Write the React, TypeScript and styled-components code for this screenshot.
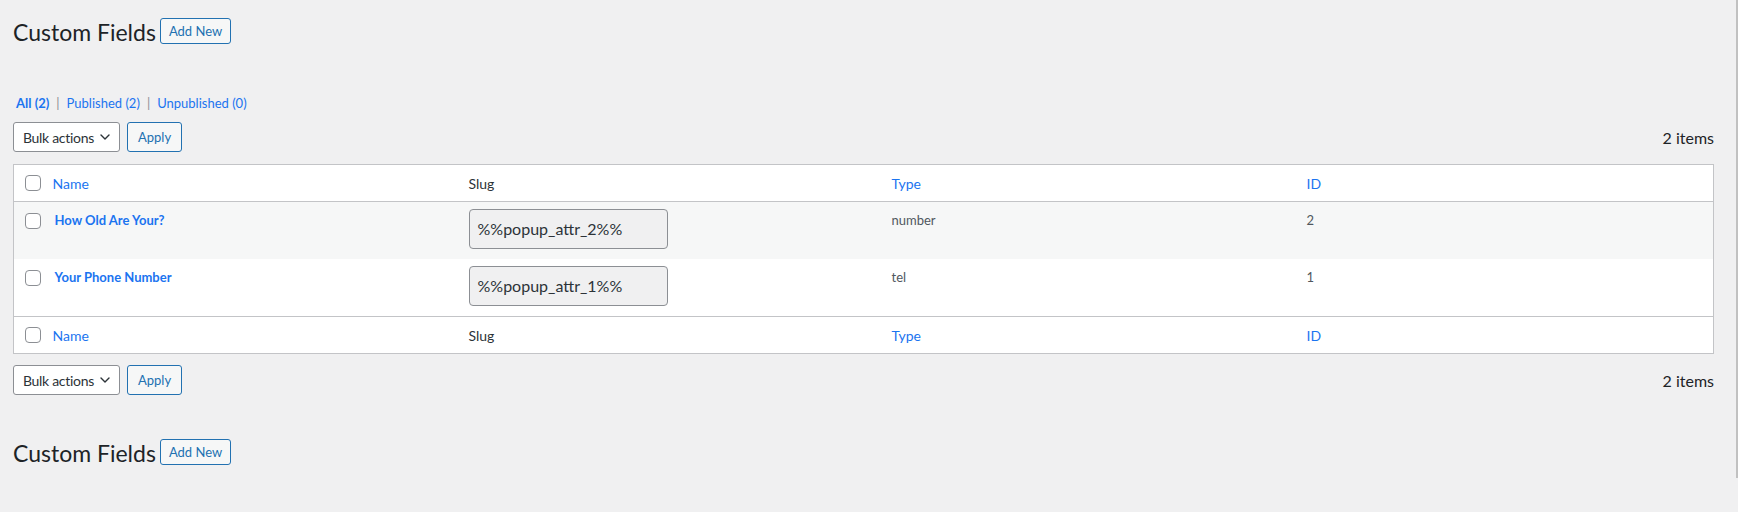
import React from "react";
import styled, { createGlobalStyle } from "styled-components";

const GlobalStyle = createGlobalStyle`
  html, body { margin: 0; padding: 0; background: #f0f0f1; }
  body {
    font-family: Lato, "Segoe UI", "Liberation Sans", sans-serif;
    color: #3c434a;
    font-size: 13px;
  }
  * { box-sizing: border-box; }
`;

const LINK = "#1b74f0";

const Page = styled.div`
  display: flex;
  align-items: flex-start;
  width: 1738px;
  min-height: 512px;
`;

const Main = styled.main`
  flex: 1;
  min-width: 0;
  padding: 0 22px 0 13px;
`;

const ScrollEdge = styled.div`
  flex-shrink: 0;
  width: 2px;
  height: 478px;
  background: #c1c1c1;
`;

const TitleRow = styled.div<{ $gap?: number }>`
  display: flex;
  align-items: flex-start;
  gap: 4px;
  padding-top: 16px;
  margin-top: ${(p) => p.$gap ?? 0}px;
`;

const Title = styled.h1`
  margin: 0;
  font-size: 23px;
  font-weight: 400;
  line-height: 32px;
  color: #1d2327;
`;

const OutlineButton = styled.button<{ $h: number; $pad: number }>`
  display: inline-flex;
  align-items: center;
  justify-content: center;
  height: ${(p) => p.$h}px;
  padding: 0 ${(p) => p.$pad}px;
  margin-top: ${(p) => (p.$h === 26 ? 2 : 0)}px;
  border: 1px solid #2271b1;
  border-radius: 3px;
  background: #f6f7f7;
  color: #2271b1;
  font-family: inherit;
  font-size: 13px;
  font-weight: 400;
  cursor: pointer;
`;

const Filters = styled.ul`
  display: flex;
  align-items: center;
  margin: 45px 0 0;
  padding: 0 0 0 3px;
  list-style: none;
  font-size: 13px;
  line-height: 20px;
`;

const FilterLink = styled.a<{ $current?: boolean }>`
  color: ${LINK};
  font-weight: ${(p) => (p.$current ? 700 : 400)};
  text-decoration: none;
`;

const Sep = styled.span`
  color: #8c8f94;
  margin: 0 7px;
`;

const TableNav = styled.div<{ $top?: boolean }>`
  display: flex;
  align-items: center;
  gap: 7px;
  height: 30px;
  margin: ${(p) => (p.$top ? "9px 0 12px" : "11px 0 0")};
`;

const Select = styled.div`
  display: flex;
  align-items: center;
  justify-content: space-between;
  width: 107px;
  height: 30px;
  padding: 0 9px 0 9px;
  border: 1px solid #8c8f94;
  border-radius: 3px;
  background: #fff;
  color: #2c3338;
  font-size: 14px;
  letter-spacing: -0.3px;
`;

const Count = styled.span`
  margin-left: auto;
  font-size: 16px;
  color: #1d2327;
`;

const Table = styled.table`
  width: 100%;
  table-layout: fixed;
  border-collapse: collapse;
  border: 1px solid #c3c4c7;
  background: #fff;
`;

const HeadRow = styled.tr<{ $foot?: boolean }>`
  ${(p) =>
    p.$foot ? "border-top: 1px solid #c3c4c7;" : "border-bottom: 1px solid #c3c4c7;"}
`;

const Th = styled.th<{ $check?: boolean }>`
  height: 37px;
  padding: ${(p) => (p.$check ? "0 0 0 11px" : "0 10px")};
  text-align: left;
  font-size: 14px;
  font-weight: 400;
  line-height: 21px;
  color: #2c3338;
  vertical-align: middle;
`;

const SortLink = styled.a`
  color: ${LINK};
  text-decoration: none;
`;

const BodyRow = styled.tr<{ $alt?: boolean }>`
  background: ${(p) => (p.$alt ? "#f6f7f7" : "#fff")};
`;

const Td = styled.td<{ $check?: boolean }>`
  padding: ${(p) => (p.$check ? "11px 0 0 11px" : "8px 10px")};
  vertical-align: top;
  font-size: 13px;
  line-height: 20px;
  color: #50575e;
`;

const RowTitle = styled.a`
  display: inline-block;
  margin-left: 2px;
  color: ${LINK};
  font-weight: 700;
  text-decoration: none;
`;

const SlugInput = styled.div`
  display: flex;
  align-items: center;
  width: 199px;
  height: 40px;
  margin: -1px 0 2px;
  padding: 0 8px;
  border: 1px solid #8c8f94;
  border-radius: 4px;
  background: #f0f0f1;
  color: #2c3338;
  font-size: 16px;
`;

const Check = styled.span`
  display: block;
  width: 16px;
  height: 16px;
  border: 1px solid #8c8f94;
  border-radius: 4px;
  background: #fff;
`;

const Chevron = () => (
  <svg width="10" height="6" viewBox="0 0 10 6" fill="none">
    <path d="M1 1l4 4 4-4" stroke="#2c3338" strokeWidth="1.4" strokeLinecap="round" strokeLinejoin="round" />
  </svg>
);

const rows = [
  { name: "How Old Are Your?", slug: "%%popup_attr_2%%", type: "number", id: 2 },
  { name: "Your Phone Number", slug: "%%popup_attr_1%%", type: "tel", id: 1 },
];

const HeaderCells = () => (
  <>
    <Th $check>
      <Check />
    </Th>
    <Th>
      <SortLink href="#">Name</SortLink>
    </Th>
    <Th>Slug</Th>
    <Th>
      <SortLink href="#">Type</SortLink>
    </Th>
    <Th>
      <SortLink href="#">ID</SortLink>
    </Th>
  </>
);

const Nav = ({ top }: { top?: boolean }) => (
  <TableNav $top={top}>
    <Select>
      <span>Bulk actions</span>
      <Chevron />
    </Select>
    <OutlineButton $h={30} $pad={10}>Apply</OutlineButton>
    <Count>2 items</Count>
  </TableNav>
);

const Heading = ({ gap }: { gap?: number }) => (
  <TitleRow $gap={gap}>
    <Title>Custom Fields</Title>
    <OutlineButton $h={26} $pad={8}>Add New</OutlineButton>
  </TitleRow>
);

export default function App() {
  return (
    <>
      <GlobalStyle />
      <Page>
        <Main>
          <Heading />
          <Filters>
            <li>
              <FilterLink href="#" $current>All (2)</FilterLink>
              <Sep>|</Sep>
            </li>
            <li>
              <FilterLink href="#">Published (2)</FilterLink>
              <Sep>|</Sep>
            </li>
            <li>
              <FilterLink href="#">Unpublished (0)</FilterLink>
            </li>
          </Filters>
          <Nav top />
          <Table>
            <colgroup>
              <col style={{ width: 29 }} />
              <col style={{ width: 416 }} />
              <col style={{ width: 423 }} />
              <col style={{ width: 415 }} />
              <col />
            </colgroup>
            <thead>
              <HeadRow>
                <HeaderCells />
              </HeadRow>
            </thead>
            <tbody>
              {rows.map((r, i) => (
                <BodyRow key={r.id} $alt={i % 2 === 0}>
                  <Td $check>
                    <Check />
                  </Td>
                  <Td>
                    <RowTitle href="#">{r.name}</RowTitle>
                  </Td>
                  <Td>
                    <SlugInput>{r.slug}</SlugInput>
                  </Td>
                  <Td>{r.type}</Td>
                  <Td>{r.id}</Td>
                </BodyRow>
              ))}
            </tbody>
            <tfoot>
              <HeadRow $foot>
                <HeaderCells />
              </HeadRow>
            </tfoot>
          </Table>
          <Nav />
          <Heading gap={26} />
        </Main>
        <ScrollEdge />
      </Page>
    </>
  );
}
